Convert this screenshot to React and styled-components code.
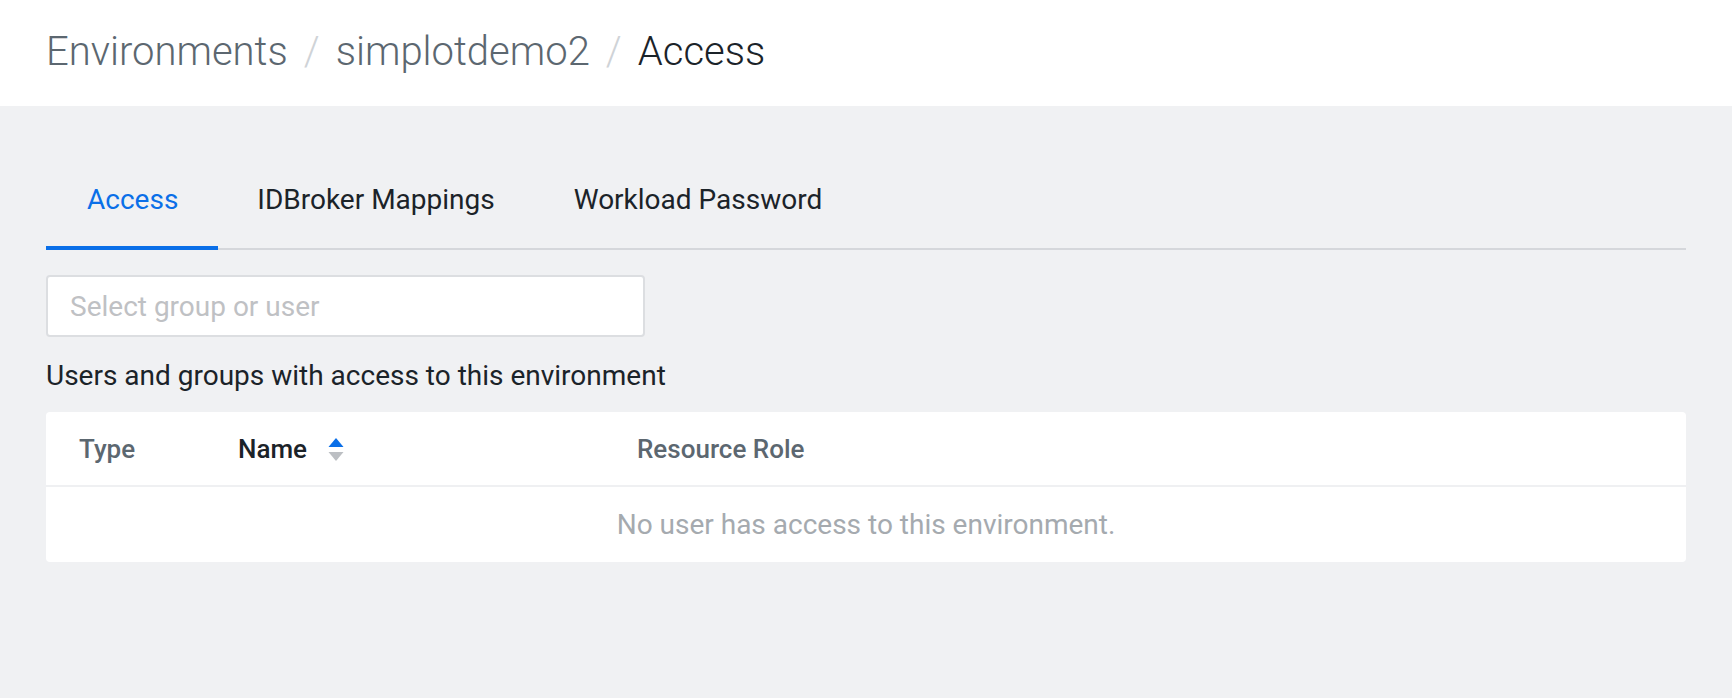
import React from "react";
import styled, { createGlobalStyle } from "styled-components";

const GlobalStyle = createGlobalStyle`
  * { box-sizing: border-box; }
  body {
    margin: 0;
    background: #f0f1f3;
    font-family: Roboto, "Liberation Sans", sans-serif;
    color: #1b2329;
  }
`;

const Page = styled.div`
  min-height: 698px;
  background: #f0f1f3;
`;

const Header = styled.header`
  height: 106px;
  background: #ffffff;
  display: flex;
  align-items: center;
  padding: 0 46px 4px;
`;

const Crumb = styled.span`
  font-size: 40px;
  font-weight: 300;
  color: ${(p) => (p.$current ? "#1b2329" : "#5c6770")};
`;

const Slash = styled.span`
  font-size: 40px;
  font-weight: 300;
  color: #cfd3d7;
  margin: 0 16px;
`;

const Content = styled.main`
  padding: 46px 46px 0;
`;

const TabBar = styled.nav`
  display: flex;
  border-bottom: 2px solid #d5d7db;
  height: 98px;
`;

const Tab = styled.button`
  border: none;
  background: none;
  padding: 0 40px 0 41px;
  height: 98px;
  margin-bottom: -2px;
  font-family: inherit;
  font-size: 28px;
  color: ${(p) => (p.$active ? "#0a6fe8" : "#1b2329")};
  border-bottom: 4px solid ${(p) => (p.$active ? "#0a6fe8" : "transparent")};
  cursor: pointer;
  & + & { padding-left: 39px; }
`;

const Search = styled.input`
  display: block;
  margin-top: 25px;
  width: 599px;
  height: 62px;
  border: 2px solid #dcdee1;
  border-radius: 4px;
  background: #fff;
  padding: 0 22px;
  font-family: inherit;
  font-size: 28px;
  color: #1b2329;
  &::placeholder { color: #bfc1c4; }
  outline: none;
`;

const Caption = styled.p`
  margin: 22px 0 19px;
  font-size: 28px;
  line-height: 34px;
  color: #1b2329;
`;

const Card = styled.div`
  background: #fff;
  border-radius: 4px;
`;

const HeadRow = styled.div`
  display: grid;
  grid-template-columns: 159px 399px 1fr;
  align-items: center;
  height: 75px;
  padding-left: 33px;
  border-bottom: 2px solid #eff0f2;
`;

const HeadCell = styled.div`
  display: flex;
  align-items: center;
  gap: 21px;
  font-size: 26px;
  font-weight: 500;
  color: ${(p) => (p.$strong ? "#1b2329" : "#5c6770")};
`;

const SortIcon = styled.svg`
  width: 16px;
  height: 24px;
`;

const Empty = styled.div`
  height: 75px;
  display: flex;
  align-items: center;
  justify-content: center;
  font-size: 28px;
  color: #a5aaaf;
`;

export default function App() {
  return (
    <Page>
      <GlobalStyle />
      <Header>
        <Crumb>Environments</Crumb>
        <Slash>/</Slash>
        <Crumb>simplotdemo2</Crumb>
        <Slash>/</Slash>
        <Crumb $current>Access</Crumb>
      </Header>
      <Content>
        <TabBar>
          <Tab $active>Access</Tab>
          <Tab>IDBroker Mappings</Tab>
          <Tab>Workload Password</Tab>
        </TabBar>
        <Search placeholder="Select group or user" />
        <Caption>Users and groups with access to this environment</Caption>
        <Card>
          <HeadRow>
            <HeadCell>Type</HeadCell>
            <HeadCell $strong>
              Name
              <SortIcon viewBox="0 0 16 24">
                <path d="M8 1 L15.5 10 H0.5 Z" fill="#0a6fe8" />
                <path d="M8 24 L15.5 15 H0.5 Z" fill="#bcbfc3" />
              </SortIcon>
            </HeadCell>
            <HeadCell>Resource Role</HeadCell>
          </HeadRow>
          <Empty>No user has access to this environment.</Empty>
        </Card>
      </Content>
    </Page>
  );
}
